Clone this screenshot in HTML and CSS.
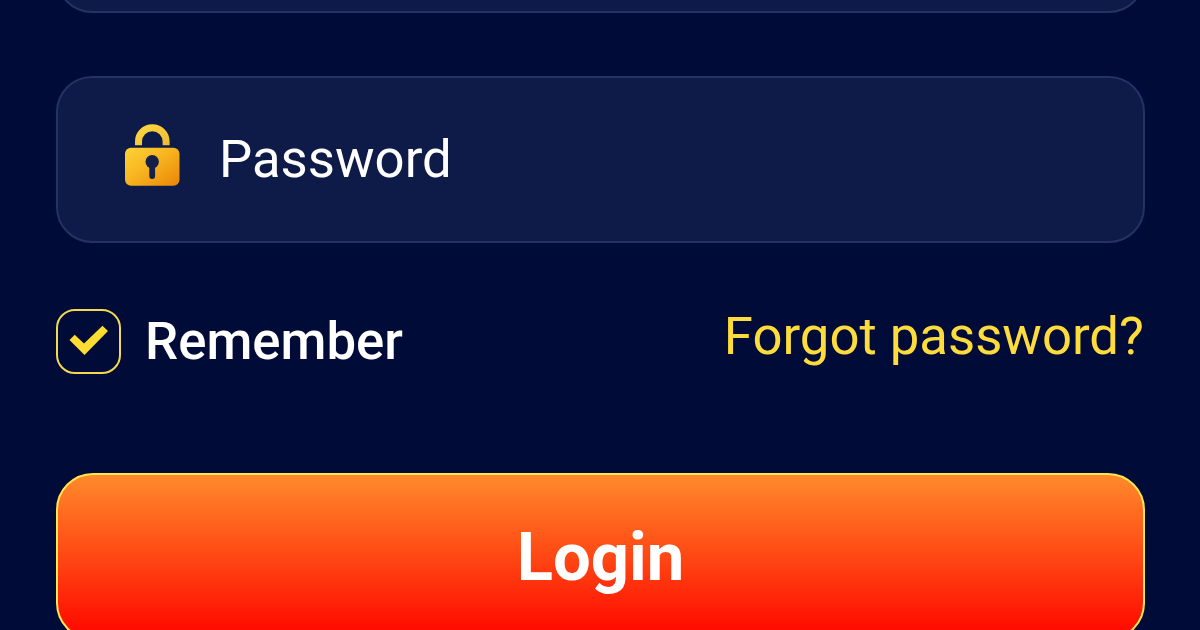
FILE: index.html
```html
<!DOCTYPE html>
<html lang="en">
<head>
<meta charset="utf-8">
<title>Login</title>
<link rel="stylesheet" href="styles.css">
</head>
<body>
<form class="login">
  <div class="field field-previous"></div>
  <label class="field">
    <svg class="lock" viewBox="0 0 56 62">
      <defs>
        <linearGradient id="gold" x1="0" y1="0" x2="1" y2="1">
          <stop offset="0" stop-color="#fdd336"/>
          <stop offset="0.45" stop-color="#f8b520"/>
          <stop offset="1" stop-color="#e98606"/>
        </linearGradient>
        <linearGradient id="shackle" x1="0" y1="0" x2="1" y2="1">
          <stop offset="0" stop-color="#fbd640"/>
          <stop offset="1" stop-color="#f0bc35"/>
        </linearGradient>
      </defs>
      <path d="M14.5 21.2V17.5a13.8 13.8 0 0 1 27.6 0v3.7" fill="none" stroke="url(#shackle)" stroke-width="7"/>
      <rect x="1" y="23.7" width="54.5" height="38" rx="6" fill="url(#gold)"/>
      <circle cx="28.2" cy="37.7" r="6.7" fill="#14204a"/>
      <path d="M28.2 39v13" stroke="#14204a" stroke-width="5.8" stroke-linecap="round"/>
    </svg>
    <span class="placeholder">Password</span>
  </label>
  <div class="options">
    <div class="remember">
      <span class="checkbox"><svg class="check" viewBox="0 0 40 31"><path d="M.5 15L5.7 9.7L15 18.5L33.5.7L39 6L15.5 30Z" fill="#fedc30"/></svg></span>
      <span class="remember-text">Remember</span>
    </div>
    <a class="forgot">Forgot password?</a>
  </div>
  <div class="submit">Login</div>
</form>
</body>
</html>
```
FILE: styles.css
```css
* { box-sizing: border-box; }
body {
  margin: 0;
  height: 630px;
  overflow: hidden;
  background: #000b37;
  color: #fff;
  font-family: Roboto, sans-serif;
}
.login { width: 1089px; margin-left: 56px; }
.field {
  display: flex;
  align-items: flex-start;
  height: 167px;
  margin-bottom: 66px;
  padding: 46px 66px 0 66px;
  border: 2px solid #253263;
  border-radius: 36px;
  background: #0e1a47;
}
.field-previous { margin-top: -154px; margin-bottom: 63px; }
.lock { width: 56px; height: 62px; }
.placeholder { margin: 4px 0 0 39px; font-size: 52.7px; line-height: 62px; }
.options { display: flex; justify-content: space-between; height: 98px; margin-bottom: 66px; }
.remember { display: flex; align-items: flex-start; }
.checkbox {
  display: flex;
  width: 65px;
  height: 65px;
  padding: 14px 0 0 11px;
  border: 2px solid #f3d94f;
  border-radius: 19px;
}
.check { width: 40px; height: 31px; }
.remember-text { margin: 1px 0 0 24px; font-size: 52.7px; font-weight: 500; line-height: 62px; }
.forgot { margin: 1px 1px 0 0; color: #fedc3c; font-size: 52.7px; line-height: 52px; }
.submit {
  height: 167px;
  border: 2px solid #ffe850;
  border-radius: 37px;
  background: linear-gradient(#ff8a2b, #ff0d00 94%);
  font-size: 67px;
  font-weight: 700;
  line-height: 165px;
  text-align: center;
}
```
